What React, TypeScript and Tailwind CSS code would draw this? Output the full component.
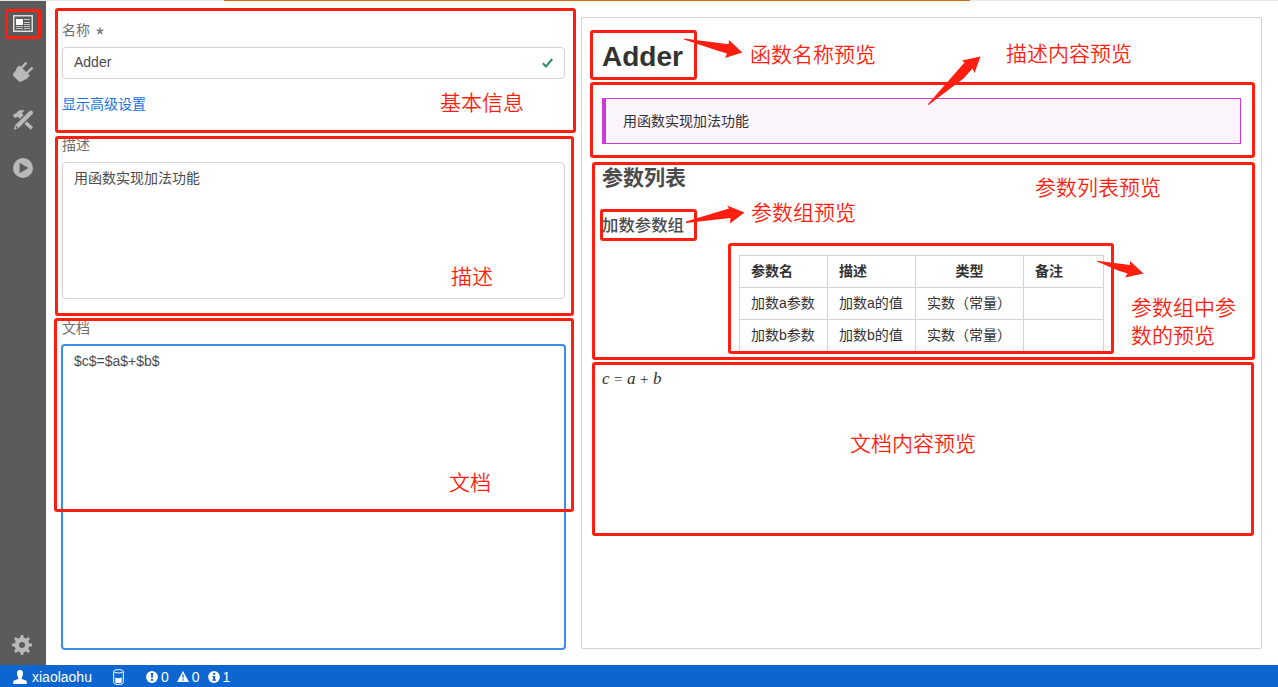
import type { ReactNode } from "react";

function Frame({ className }: { className: string }) {
  return <div className={`absolute rounded-[3px] border-[3px] border-[#ff1e10] ${className}`} />;
}

function Note({ className, children }: { className: string; children: ReactNode }) {
  return (
    <div className={`absolute text-[21px] leading-7 font-[350] whitespace-nowrap text-[#ff1e10] ${className}`}>
      {children}
    </div>
  );
}

function PanelIcon() {
  return (
    <svg width="20" height="17" viewBox="0 0 20 17" fill="none">
      <rect x="0.75" y="0.75" width="18.5" height="15.5" stroke="#dedede" strokeWidth="1.5" />
      <rect x="3" y="4" width="7" height="6" fill="#fff" />
      <path d="M11 4.5h6M11 7.5h6M11 9.5h6M3 11.5h7M11 11.5h6M3 13.5h7M11 13.5h6" stroke="#c4c4c4" strokeWidth="1" />
    </svg>
  );
}

function PlugIcon() {
  return (
    <svg width="22" height="22" viewBox="0 0 22 22" fill="#b9b9b9">
      <path d="M7.4 4.4 17.9 14.6 14.4 18.2 13 18.6 9.6 20.6Q8.1 21.3 6.8 20.2L1.4 14.9Q.5 13.8 1.3 12.2L4.1 9.2 4.4 7.2Z" />
      <path d="M9.7 6.7 13.8 2.2M14.9 12 19.8 7.3" stroke="#b9b9b9" strokeWidth="2.4" strokeLinecap="round" />
    </svg>
  );
}

function ToolsIcon() {
  return (
    <svg width="22" height="22" viewBox="0 0 22 22" fill="#b9b9b9">
      <path d="M.8 6.4 2.5 4.8 4 4.5 6 2.2Q9 .2 12.8 1.7Q10.2 2.5 10 4.6L11.6 6.3 8 10 6.2 8 5.4 7.6 3.4 9.3Z" />
      <path d="m14.8 12.2 6.2 6.1-2.3 2.5-6.3-6.1Z" />
      <path d="M17.6 1.9Q19 .9 20.3 2.2T20.6 5L6.9 18.8 1.8 20.9 3.3 15.9Z" />
      <path d="m3.9 17.4 1.6 1.6" stroke="#5b5b5b" strokeWidth="1.2" />
      <path d="M11.6 6.5 7 11.1M14.6 11.8 12 14.4" stroke="#5b5b5b" strokeWidth="0.8" />
    </svg>
  );
}

function PlayIcon() {
  return (
    <svg width="22" height="22" viewBox="0 0 22 22">
      <circle cx="11" cy="11" r="10" fill="#b9b9b9" />
      <path d="M7.6 5.7v10.6l8.8-5.3z" fill="#5b5b5b" />
    </svg>
  );
}

const teeth = [0, 45, 90, 135, 180, 225, 270, 315];

function GearIcon() {
  return (
    <svg width="22" height="22" viewBox="0 0 22 22">
      {teeth.map((a) => (
        <path key={a} d="M9 5.5 9.8 1h2.4L13 5.5z" fill="#b9b9b9" transform={`rotate(${a} 11 11)`} />
      ))}
      <circle cx="11" cy="11" r="5.2" fill="none" stroke="#b9b9b9" strokeWidth="4.4" />
    </svg>
  );
}

function Sidebar() {
  return (
    <nav className="flex w-[46px] shrink-0 flex-col items-center bg-[#5b5b5b] pt-[11px]">
      <div className="flex h-[23px] items-center"><PanelIcon /></div>
      <div className="mt-[26px]"><PlugIcon /></div>
      <div className="mt-[26px]"><ToolsIcon /></div>
      <div className="mt-[26px]"><PlayIcon /></div>
      <div className="mt-auto mr-[2px] mb-[9px]"><GearIcon /></div>
    </nav>
  );
}

function StatusBar() {
  return (
    <footer className="flex h-[22px] shrink-0 items-center bg-[#0d66d0] pt-px pl-[13px] text-[14px] leading-[22px] text-white">
      <svg width="14" height="14" viewBox="0 0 14 14" fill="#fff">
        <path d="M7 0C9.2 0 10.2 1.5 10 4 9.9 5.6 9.2 6.8 8.7 7.5V9L13 10.6Q14 11.2 14 14H0Q0 11.2 1 10.6L5.3 9V7.5C4.8 6.8 4.1 5.6 4 4 3.8 1.5 4.8 0 7 0Z" />
      </svg>
      <span className="ml-[5px] w-[60px]">xiaolaohu</span>
      <svg className="ml-[21px]" width="11" height="16" viewBox="0 0 11 16" fill="none" stroke="#fff">
        <ellipse cx="5.5" cy="2.3" rx="4.8" ry="1.7" />
        <path d="M.7 2.3v11.2q0 2 4.8 2t4.8-2V2.3" />
        <path d="M2.3 8.6q3.2 1.3 6.4 0v4.9q-3.2 1.1-6.4 0z" fill="#fff" stroke="none" />
      </svg>
      <svg className="ml-[22px]" width="12" height="12" viewBox="0 0 11 11">
        <circle cx="5.5" cy="5.5" r="5.4" fill="#fff" />
        <path d="M4.4 1.8h2.2L6.2 6.3H4.8z" fill="#0d66d0" />
        <circle cx="5.5" cy="8.1" r="1.1" fill="#0d66d0" />
      </svg>
      <span className="ml-[3px]">0</span>
      <svg className="ml-[8px]" width="12" height="11" viewBox="0 0 12 11">
        <path d="M6 0 12 11H0z" fill="#fff" />
        <path d="M5.2 3.5h1.6L6.4 7.4h-.8zM5.3 8.2h1.4v1.3H5.3z" fill="#0d66d0" />
      </svg>
      <span className="ml-[3px]">0</span>
      <svg className="ml-[8px]" width="12" height="12" viewBox="0 0 11 11">
        <circle cx="5.5" cy="5.5" r="5.4" fill="#fff" />
        <path d="M4.6 1.8h2v1.6h-2zM3.9 4.5h2.7v3.4h.8v1H3.9v-1h.8V5.4h-.8z" fill="#0d66d0" />
      </svg>
      <span className="ml-[3px]">1</span>
    </footer>
  );
}

function BasicForm() {
  return (
    <section className="flex w-[535px] shrink-0 flex-col pr-[14px] pl-4 text-[14px] leading-5 text-[#4b4b4b]">
      <div className="mt-[19px] flex text-[#6e6e6e]">
        名称
        <svg className="mt-[7px] ml-[6px]" width="8" height="8" viewBox="0 0 8 8" stroke="#7c7c7c" strokeWidth="1.4">
          <path d="M4 4V.5M4 4 .7 3M4 4l3.3-1M4 4 1.9 7M4 4l2.1 3" />
        </svg>
      </div>
      <div className="mt-[7px] flex h-8 w-[503px] items-center justify-between rounded-[4px] border border-[#d3d3d3] pr-[11px] pb-[2px] pl-[11px]">
        <span>Adder</span>
        <svg className="mt-[2px]" width="11" height="10" viewBox="0 0 11 10" fill="none" stroke="#2d8f67" strokeWidth="2">
          <path d="M.8 5.2 4 8.5 10.2 1" />
        </svg>
      </div>
      <a className="mt-[15px] text-[#1473e6]">显示高级设置</a>
      <label className="mt-[21px] text-[#6e6e6e]">描述</label>
      <div className="mt-[7px] h-[137px] w-[503px] rounded-[4px] border border-[#d3d3d3] px-[11px] pt-[5px]">用函数实现加法功能</div>
      <label className="mt-[19px] text-[#6e6e6e]">文档</label>
      <div className="mt-[6px] -ml-px h-[306px] w-[505px] rounded-[4px] border-2 border-[#378ef0] px-[11px] pt-[5px]">$c$=$a$+$b$</div>
    </section>
  );
}

const rows = [
  ["加数a参数", "加数a的值", "实数（常量）", ""],
  ["加数b参数", "加数b的值", "实数（常量）", ""],
];

function Preview() {
  return (
    <section className="mt-4 h-[632px] w-[681px] rounded-[2px] border border-[#d3d3d3] px-5 text-[14px] text-[#323232]">
      <h1 className="mt-[21px] text-[28px] leading-9 font-bold">Adder</h1>
      <div className="mt-[23px] flex h-[46px] items-center border border-l-4 border-[#cb3bdb] bg-[#fcf5fd] pl-[17px]">用函数实现加法功能</div>
      <h2 className="mt-[20px] text-[21px] leading-7 font-bold text-[#4b4b4b]">参数列表</h2>
      <h3 className="mt-[21px] text-[16.4px] leading-6 font-medium text-[#4b4b4b]">加数参数组</h3>
      <div className="mt-[18px] ml-[137px] h-[97px] w-[365px] overflow-hidden">
        <table className="w-[365px] table-fixed border-collapse">
          <colgroup>
            <col className="w-[88px]" />
            <col className="w-[88px]" />
            <col className="w-[108px]" />
            <col className="w-[80px]" />
          </colgroup>
          <thead>
            <tr className="h-8">
              <th className="border border-[#d3d3d3] px-[11px] text-left font-bold">参数名</th>
              <th className="border border-[#d3d3d3] px-[11px] text-left font-bold">描述</th>
              <th className="border border-[#d3d3d3] px-[11px] text-center font-bold">类型</th>
              <th className="border border-[#d3d3d3] px-[11px] text-left font-bold">备注</th>
            </tr>
          </thead>
          <tbody>
            {rows.map((r) => (
              <tr key={r[0]} className="h-8">
                {r.map((c, i) => (
                  <td key={i} className="border border-[#d3d3d3] px-[11px] whitespace-nowrap">{c}</td>
                ))}
              </tr>
            ))}
          </tbody>
        </table>
      </div>
      <p className="mt-[17px] flex font-['Liberation_Serif',serif] text-[17px] leading-5 text-[#323232]">
        <i className="w-3">c</i>
        <span className="w-[13px] text-[15px]">=</span>
        <i className="w-[13px]">a</i>
        <span className="w-[13px] text-[15px]">+</span>
        <i>b</i>
      </p>
    </section>
  );
}

function Annotations() {
  return (
    <div className="pointer-events-none absolute inset-0">
      <Frame className="top-[9px] left-[5px] h-[30px] w-[36px]" />
      <Frame className="top-[8px] left-[55px] h-[125px] w-[521px]" />
      <Frame className="top-[136px] left-[55px] h-[180px] w-[519px]" />
      <Frame className="top-[318px] left-[54px] h-[194px] w-[520px]" />
      <Frame className="top-[30px] left-[590px] h-[50px] w-[107px]" />
      <Frame className="top-[82px] left-[590px] h-[76px] w-[665px]" />
      <Frame className="top-[162px] left-[592px] h-[198px] w-[663px]" />
      <Frame className="top-[209px] left-[600px] h-[32px] w-[97px]" />
      <Frame className="top-[243px] left-[728px] h-[111px] w-[386px]" />
      <Frame className="top-[362px] left-[592px] h-[174px] w-[662px]" />
      <svg className="absolute inset-0" width="1278" height="687" viewBox="0 0 1278 687" fill="#ff1e10">
        <path d="M684 38.5 728.5 44.3 729 40 742.3 52.5 725 58 727 53.5 717 50.5 684 39.6Z" />
        <path d="M927.6 104.5 964.5 62.5 962 60.5 980.5 56.5 974.5 73 972.5 68.5 963.5 78.5 928.5 105Z" />
        <path d="M686 221.5 729 208.5 727 205.5 744.5 212.5 730 223.5 730.5 218 686 223Z" />
        <path d="M1097 260.8 1130 265 1130 261 1143.5 273.5 1125 277.5 1127.5 273.5 1118 270.5 1097 261.6Z" />
      </svg>
      <Note className="top-[89px] left-[440px]">基本信息</Note>
      <Note className="top-[263px] left-[451px]">描述</Note>
      <Note className="top-[469px] left-[449px]">文档</Note>
      <Note className="top-[41px] left-[750px]">函数名称预览</Note>
      <Note className="top-[40px] left-[1006px]">描述内容预览</Note>
      <Note className="top-[174px] left-[1035px]">参数列表预览</Note>
      <Note className="top-[199px] left-[751px]">参数组预览</Note>
      <Note className="top-[294px] left-[1131px]">参数组中参<br />数的预览</Note>
      <Note className="top-[430px] left-[850px]">文档内容预览</Note>
    </div>
  );
}

export default function App() {
  return (
    <div className="relative flex h-[687px] w-[1278px] flex-col overflow-hidden bg-white font-['Liberation_Sans','Noto_Sans_CJK_SC',sans-serif]">
      <div className="h-px shrink-0 bg-[#e8e8e8] pl-[224px]">
        <div className="h-px w-[746px] bg-[#cb6a10]" />
      </div>
      <main className="flex min-h-0 flex-1">
        <Sidebar />
        <BasicForm />
        <Preview />
      </main>
      <StatusBar />
      <Annotations />
    </div>
  );
}
